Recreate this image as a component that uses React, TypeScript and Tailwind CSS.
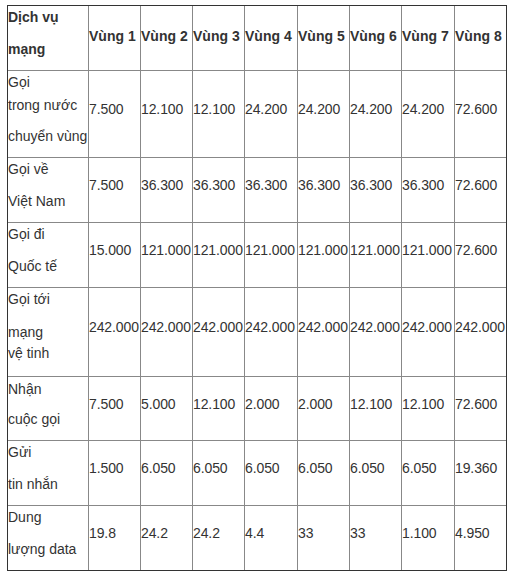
type Line = { text: string; mt: number };
type Row = { label: Line[]; pb: number; values: string[] };

const cols = ["Vùng 1", "Vùng 2", "Vùng 3", "Vùng 4", "Vùng 5", "Vùng 6", "Vùng 7", "Vùng 8"];

const rows: Row[] = [
  {
    label: [
      { text: "Gọi", mt: 0 },
      { text: "trong nước", mt: 1 },
      { text: "chuyển vùng", mt: 9 },
    ],
    pb: 10,
    values: ["7.500", "12.100", "12.100", "24.200", "24.200", "24.200", "24.200", "72.600"],
  },
  {
    label: [
      { text: "Gọi về", mt: 0 },
      { text: "Việt Nam", mt: 10 },
    ],
    pb: 10,
    values: ["7.500", "36.300", "36.300", "36.300", "36.300", "36.300", "36.300", "72.600"],
  },
  {
    label: [
      { text: "Gọi đi", mt: 0 },
      { text: "Quốc tế", mt: 10 },
    ],
    pb: 10,
    values: ["15.000", "121.000", "121.000", "121.000", "121.000", "121.000", "121.000", "72.600"],
  },
  {
    label: [
      { text: "Gọi tới", mt: 0 },
      { text: "mạng", mt: 11 },
      { text: "vệ tinh", mt: -1 },
    ],
    pb: 12,
    values: ["242.000", "242.000", "242.000", "242.000", "242.000", "242.000", "242.000", "242.000"],
  },
  {
    label: [
      { text: "Nhận", mt: 1 },
      { text: "cuộc gọi", mt: 8 },
    ],
    pb: 10,
    values: ["7.500", "5.000", "12.100", "2.000", "2.000", "12.100", "12.100", "72.600"],
  },
  {
    label: [
      { text: "Gửi", mt: 0 },
      { text: "tin nhắn", mt: 10 },
    ],
    pb: 10,
    values: ["1.500", "6.050", "6.050", "6.050", "6.050", "6.050", "6.050", "19.360"],
  },
  {
    label: [
      { text: "Dung", mt: 0 },
      { text: "lượng data", mt: 10 },
    ],
    pb: 10,
    values: ["19.8", "24.2", "24.2", "4.4", "33", "33", "1.100", "4.950"],
  },
];

function Label({ lines, pb, bold }: { lines: Line[]; pb: number; bold?: boolean }) {
  return (
    <div className={bold ? "font-bold" : ""} style={{ paddingBottom: pb }}>
      {lines.map((l) => (
        <div key={l.text} className="leading-[22px] whitespace-nowrap" style={{ marginTop: l.mt }}>
          {l.text}
        </div>
      ))}
    </div>
  );
}

export default function App() {
  return (
    <div className="min-h-[577px] bg-white pt-[5px] pl-[7px] text-[14px] text-[#333] [font-family:'Liberation_Sans',Arial,sans-serif]">
      <div className="w-[500px] border border-[#333]">
        <div className="grid grid-cols-[80px_52px_52px_52px_53px_52px_52px_53px_52px]">
          {/* header */}
          <Label
            bold
            pb={10}
            lines={[
              { text: "Dịch vụ", mt: 0 },
              { text: "mạng", mt: 10 },
            ]}
          />
          {cols.map((c) => (
            <div key={c} className="flex items-center border-l border-[#888] pb-[5px] font-bold whitespace-nowrap leading-[22px]">
              {c}
            </div>
          ))}

          {rows.map((r) => (
            <div key={r.label[0].text} className="contents">
              <div className="border-t border-[#888]">
                <Label lines={r.label} pb={r.pb} />
              </div>
              {r.values.map((v, i) => (
                <div
                  key={i}
                  className="flex items-center border-t border-l border-[#888] pb-[10px] whitespace-nowrap leading-[22px] tracking-[-0.1px]"
                >
                  {v}
                </div>
              ))}
            </div>
          ))}
        </div>
      </div>
    </div>
  );
}
